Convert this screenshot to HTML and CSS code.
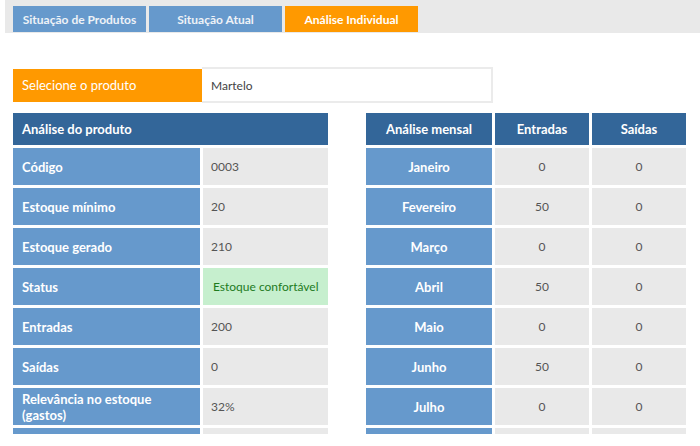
FILE: index.html
```html
<!DOCTYPE html>
<html lang="pt">
<head>
<meta charset="utf-8">
<title>Análise Individual</title>
<link rel="stylesheet" href="styles.css">
</head>
<body>
<div class="page">
  <div class="topbar">
    <div class="tab tab-blue">Situação de Produtos</div>
    <div class="tab tab-blue">Situação Atual</div>
    <div class="tab tab-orange">Análise Individual</div>
  </div>

  <div class="content">
    <div class="select-row">
      <div class="select-label">Selecione o produto</div>
      <div class="select-input">Martelo</div>
    </div>

    <div class="tables">
      <div class="grid grid-left">
        <div class="head head-span">Análise do produto</div>
        <div class="lbl">Código</div><div class="val">0003</div>
        <div class="lbl">Estoque mínimo</div><div class="val">20</div>
        <div class="lbl">Estoque gerado</div><div class="val">210</div>
        <div class="lbl">Status</div><div class="val val-ok">Estoque confortável</div>
        <div class="lbl">Entradas</div><div class="val">200</div>
        <div class="lbl">Saídas</div><div class="val">0</div>
        <div class="lbl">Relevância no estoque (gastos)</div><div class="val">32%</div>
        <div class="lbl">Relevância nas vendas (lucro)</div><div class="val">0%</div>
      </div>

      <div class="grid grid-right">
        <div class="head center">Análise mensal</div>
        <div class="head center">Entradas</div>
        <div class="head center">Saídas</div>
        <div class="lbl center">Janeiro</div><div class="val center">0</div><div class="val center">0</div>
        <div class="lbl center">Fevereiro</div><div class="val center">50</div><div class="val center">0</div>
        <div class="lbl center">Março</div><div class="val center">0</div><div class="val center">0</div>
        <div class="lbl center">Abril</div><div class="val center">50</div><div class="val center">0</div>
        <div class="lbl center">Maio</div><div class="val center">0</div><div class="val center">0</div>
        <div class="lbl center">Junho</div><div class="val center">50</div><div class="val center">0</div>
        <div class="lbl center">Julho</div><div class="val center">0</div><div class="val center">0</div>
        <div class="lbl center">Agosto</div><div class="val center">50</div><div class="val center">0</div>
      </div>
    </div>
  </div>
</div>
</body>
</html>
```

FILE: styles.css
```css
html, body {
  margin: 0;
  padding: 0;
  background: #ffffff;
}

body {
  font-family: Lato, "Open Sans", "Liberation Sans", sans-serif;
  font-size: 12px;
}

.page {
  height: 434px;
  overflow: hidden;
}

.topbar {
  margin-left: 5px;
  height: 33px;
  box-sizing: border-box;
  background: #e9e9e9;
  padding: 6px 0 0 8px;
  display: flex;
  gap: 3px;
}

.tab {
  width: 133px;
  height: 26px;
  display: flex;
  align-items: center;
  justify-content: center;
  font-weight: bold;
  font-size: 12px;
}

.tab-blue {
  background: #6699cc;
  color: #eef2f7;
}

.tab-orange {
  background: #ff9900;
  color: #ffffff;
}

.content {
  padding: 34px 0 0 13px;
}

.select-row {
  display: flex;
  align-items: center;
  height: 36px;
}

.select-label {
  width: 189px;
  height: 33px;
  box-sizing: border-box;
  background: #ff9900;
  color: #ffffff;
  padding-left: 9px;
  display: flex;
  align-items: center;
  font-size: 13px;
}

.select-input {
  width: 291px;
  height: 36px;
  box-sizing: border-box;
  border: 2px solid #ebebeb;
  border-left: none;
  padding-left: 9px;
  display: flex;
  align-items: center;
  color: #444444;
  font-size: 12px;
}

.tables {
  margin-top: 10px;
  display: flex;
  gap: 38px;
  align-items: flex-start;
}

.grid {
  display: grid;
  gap: 3px;
  grid-template-rows: 32px;
  grid-auto-rows: 37px;
}

.grid-left {
  grid-template-columns: 187px 125px;
}

.grid-right {
  grid-template-columns: 126px 94px 94px;
}

.head {
  background: #336699;
  color: #ffffff;
  font-weight: bold;
  font-size: 13px;
  display: flex;
  align-items: center;
  padding-left: 9px;
}

.head-span {
  grid-column: 1 / span 2;
}

.lbl {
  background: #6699cc;
  color: #ffffff;
  font-weight: bold;
  font-size: 13px;
  line-height: 16px;
  display: flex;
  align-items: center;
  padding: 0 9px;
}

.val {
  background: #e9e9e9;
  color: #555555;
  font-size: 12px;
  display: flex;
  align-items: center;
  padding-left: 8px;
}

.val-ok {
  background: #c6efce;
  color: #1e7b1e;
  padding-left: 10px;
}

.center {
  justify-content: center;
  padding-left: 0;
  padding-right: 0;
}
```
